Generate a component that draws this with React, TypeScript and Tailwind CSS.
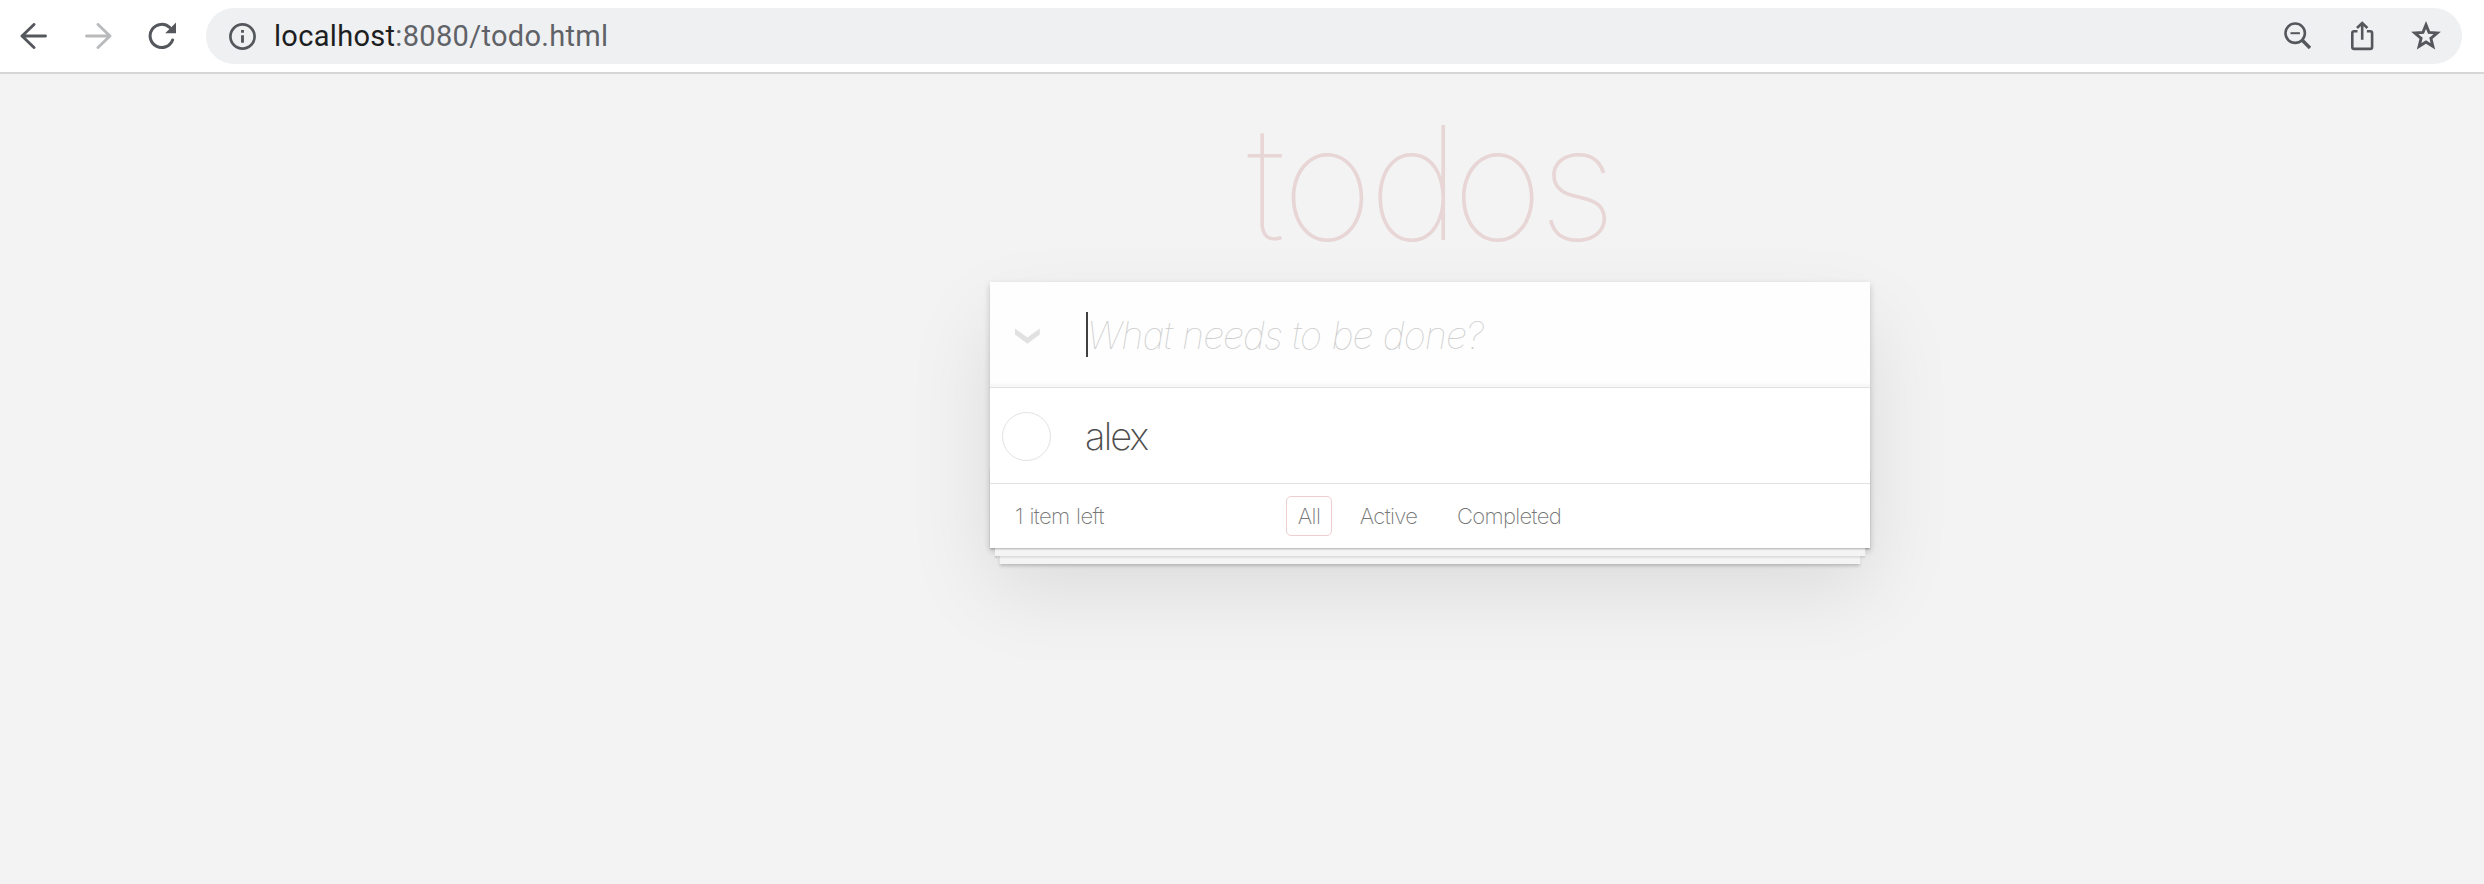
import type { ReactNode } from "react";

function Icon({ w, h, className = "", children }: { w: number; h: number; className?: string; children: ReactNode }) {
  return (
    <svg width={w} height={h} viewBox={`0 0 ${w} ${h}`} fill="none" stroke="currentColor" className={`shrink-0 ${className}`}>
      {children}
    </svg>
  );
}

const ArrowPath = () => <path d="M25.5 13H2M14 1.5L2 13L14 24.5" strokeWidth="2.9" strokeLinecap="round" strokeLinejoin="round" />;

function Toolbar() {
  return (
    <header className="flex h-[74px] items-center border-b-2 border-[#d6d6d6] bg-white pr-[22px] pl-5 text-[#54585d]">
      <Icon w={28} h={26}><ArrowPath /></Icon>
      <Icon w={28} h={26} className="ml-[36px] -scale-x-100 text-[#b9babc]"><ArrowPath /></Icon>
      <Icon w={28} h={28} className="ml-[36px]">
        <path d="M21.6 5.4A11.6 11.6 0 1 0 24.6 18" strokeWidth="3" strokeLinecap="round" />
        <path d="M28 .5V11.3H17.2z" fill="currentColor" stroke="none" />
      </Icon>
      <div className="ml-[30px] flex h-14 flex-1 items-center rounded-full bg-[#eff0f2] pr-[21px] pl-[23px]">
        <Icon w={27} h={27}>
          <circle cx="13.5" cy="13.5" r="12.1" strokeWidth="2.7" />
          <path d="M13.5 12.2v7.6M13.5 7v2.8" strokeWidth="2.9" />
        </Icon>
        <span className="ml-[18px] flex-1 font-['Roboto',sans-serif] text-[29px] leading-8 tracking-[0.31px] whitespace-nowrap text-[#5f6267]">
          <span className="text-[#1d1e21]">localhost</span>:8080/todo.html
        </span>
        <Icon w={28} h={28}>
          <circle cx="11.2" cy="11.2" r="9.7" strokeWidth="2.6" />
          <path d="M6.5 11.2h9.4" strokeWidth="2" />
          <path d="M18.3 18.3L26 26" strokeWidth="3.4" />
        </Icon>
        <Icon w={24} h={30} className="ml-[38px]">
          <path d="M7.5 10.2H4.2Q2.3 10.2 2.3 12.1V26Q2.3 27.9 4.2 27.9H20.2Q22.1 27.9 22.1 26V12.1Q22.1 10.2 20.2 10.2H16.9" strokeWidth="2.6" />
          <path d="M12.2 18.7V2.6M7 7L12.2 2L17.4 7" strokeWidth="2.6" />
        </Icon>
        <Icon w={30} h={30} className="ml-[37px]">
          <path d="M15 3.9L18 11.4L26.2 12L19.9 17.3L21.9 25.3L15 21L8.1 25.3L10.1 17.3L3.8 12L12 11.4z" strokeWidth="2.9" />
        </Icon>
      </div>
    </header>
  );
}

const filters = ["All", "Active", "Completed"];

export default function App() {
  return (
    <div className="flex h-[884px] flex-col overflow-hidden bg-[#f3f3f3] font-['Inter','Liberation_Sans',sans-serif] text-[#4d4d4d]">
      <Toolbar />
      <main className="ml-[990px] w-[880px]">
        <h1 className="h-[208px] pt-[18px] pl-[257px] text-[158px] leading-[182px] font-thin tracking-[-4.8px] whitespace-nowrap text-[#e8d5d5]">
          <span className="tracking-[-3.3px]">t</span>o<span className="tracking-[-8.3px]">d</span>os
        </h1>
        <section className="bg-white shadow-[0_3.2px_6.4px_rgba(0,0,0,0.2),0_40px_80px_rgba(0,0,0,0.1)]">
          <div className="flex h-[105px] items-center bg-[#fefefe] pl-[25px] shadow-[inset_0_-3.2px_1.6px_rgba(0,0,0,0.03)]">
            <Icon w={25} h={16} className="mt-[3px]">
              <path d="M0 .5L12.4 9.4L24.8 .5V6.5L12.4 15.8L0 6.5z" fill="#e1e1e1" stroke="none" />
            </Icon>
            <span className="ml-[46px] h-[45px] w-[2px] bg-[#404040]" />
            <span className="mt-px -ml-px text-[38px] leading-[46px] font-thin tracking-[-1.05px] [word-spacing:0.8px] whitespace-nowrap text-[#cdcdcd] italic">
              What needs to be done?
            </span>
          </div>
          <div className="flex h-[97px] items-center border-y border-[#e1e1e1] pl-3">
            <span className="mt-px size-[49px] rounded-full border border-[#e2e2e2]" />
            <span className="mt-px ml-[34px] text-[38px] leading-[46px] font-extralight tracking-[-1.8px]">alex</span>
          </div>
          <footer className="relative h-[64px]">
            <div className="absolute inset-x-0 bottom-0 h-20 shadow-[0_1.6px_1.6px_rgba(0,0,0,0.2),0_12.8px_0_-4.8px_#f4f4f4,0_14.4px_1.6px_-4.8px_rgba(0,0,0,0.2),0_25.6px_0_-9.6px_#f4f4f4,0_27.2px_3.2px_-9.6px_rgba(0,0,0,0.2)]" />
            <div className="flex h-full items-center pl-[25px] text-[22px] leading-[27px] font-extralight tracking-[-0.65px] whitespace-nowrap text-[#777]">
              <span className="w-[271px] [word-spacing:1.2px]">1 item left</span>
              <ul className="flex gap-4">
                {filters.map((f) => (
                  <li
                    key={f}
                    className={`rounded-[5px] border px-[10.8px] py-[5.5px] ${f === "All" ? "border-[#efced2]" : "border-transparent"}`}
                  >
                    {f}
                  </li>
                ))}
              </ul>
            </div>
          </footer>
        </section>
      </main>
    </div>
  );
}
